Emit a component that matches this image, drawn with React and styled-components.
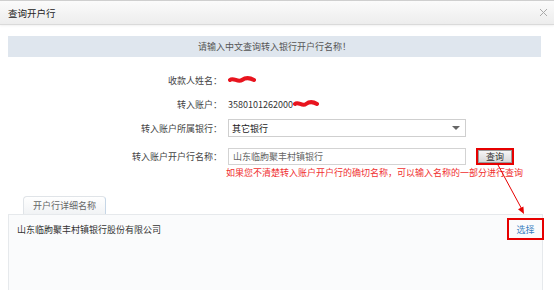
import React from 'react'
import styled, { createGlobalStyle } from 'styled-components'

const GlobalStyle = createGlobalStyle`
  body {
    margin: 0;
    background: #fff;
    font-family: "Noto Sans CJK SC", "Liberation Sans", sans-serif;
  }
`

const Dialog = styled.div`
  position: relative;
  width: 554px;
  height: 290px;
  overflow: hidden;
  background: #fff;
  border-top: 1px solid #cfcfcf;
  box-sizing: border-box;
`

const Header = styled.div`
  height: 23px;
  display: flex;
  align-items: center;
  justify-content: space-between;
  padding: 0 6px 0 8px;
  background: linear-gradient(#fbfbfb, #ededed);
  border-bottom: 1px solid #dadada;
  box-shadow: 0 1px 2px rgba(0, 0, 0, 0.06);
`

const Title = styled.div`
  font-size: 9.5px;
  color: #222;
`

const Body = styled.div`
  padding: 11px 13px 0 8px;
`

const Banner = styled.div`
  height: 21px;
  display: flex;
  align-items: center;
  justify-content: center;
  background: #dfe6ee;
  color: #555;
  font-size: 9px;
`

const Row = styled.div`
  display: grid;
  grid-template-columns: 214px 1fr;
  column-gap: 6px;
  align-items: center;
  height: ${({ $h }) => $h}px;
  margin-top: ${({ $mt }) => $mt}px;
`

const Label = styled.div`
  text-align: right;
  color: #444;
  font-size: 9px;
`

const Value = styled.div`
  display: flex;
  align-items: center;
  color: #333;
  font-size: 9px;
`

const Select = styled.div`
  width: 238px;
  height: 18px;
  box-sizing: border-box;
  border: 1px solid #cfcfcf;
  display: flex;
  align-items: center;
  justify-content: space-between;
  padding: 0 5px 0 3px;
  color: #222;
  font-size: 9px;
`

const Caret = styled.span`
  width: 0;
  height: 0;
  border-left: 4px solid transparent;
  border-right: 4px solid transparent;
  border-top: 4px solid #666;
`

const Input = styled.div`
  width: 238px;
  height: 17px;
  box-sizing: border-box;
  border: 1px solid #d3d3d3;
  display: flex;
  align-items: center;
  padding: 0 4px;
  color: #666;
  font-size: 9px;
`

const Highlight = styled.div`
  box-sizing: border-box;
  border: 2px solid #e60000;
  width: ${({ $w }) => $w}px;
  height: ${({ $h }) => $h}px;
  margin-left: ${({ $ml }) => $ml || 0}px;
  display: flex;
  align-items: center;
  justify-content: center;
`

const Button = styled.div`
  width: 100%;
  height: 100%;
  box-sizing: border-box;
  border: 1px solid #9a9a9a;
  background: linear-gradient(#f6f6f6, #d9d9d9);
  display: flex;
  align-items: center;
  justify-content: center;
  color: #333;
  font-size: 9px;
`

const Hint = styled.div`
  margin-left: -2px;
  color: #f03030;
  font-size: 9px;
  white-space: nowrap;
`

const TabBar = styled.div`
  display: flex;
  align-items: flex-end;
  height: 18px;
  margin-top: 17px;
  padding-left: 15px;
`

const Tab = styled.div`
  width: 83px;
  height: 18px;
  box-sizing: border-box;
  border: 1px solid #e0e4e8;
  border-right-color: #c6d6e6;
  border-bottom: none;
  border-radius: 4px 4px 0 0;
  background: linear-gradient(#ffffff, #f1f3f5);
  display: flex;
  align-items: center;
  justify-content: center;
  color: #666;
  font-size: 9px;
`

const Panel = styled.div`
  width: 535px;
  height: 80px;
  box-sizing: border-box;
  background: #fafbfc;
  border: 1px solid #e6e9ec;
  border-bottom: none;
  padding-top: 3px;
`

const ResultRow = styled.div`
  display: flex;
  align-items: center;
  justify-content: space-between;
  height: 22px;
  padding-left: 8px;
  margin-right: -2px;
  color: #333;
  font-size: 9px;
`

const PickLink = styled.span`
  color: #3a7fc0;
  font-size: 9px;
`

const Overlay = styled.svg`
  position: absolute;
  left: 0;
  top: 0;
  pointer-events: none;
`

const Scribble = ({ w }) => (
  <svg width={w} height="8" viewBox={`0 0 ${w} 8`}>
    <path
      d={`M2 4 C${w * 0.2} 1, ${w * 0.35} 7, ${w * 0.5} 4 S${w * 0.8} 2, ${w - 2} 4`}
      stroke="#e8141e"
      strokeWidth="4"
      fill="none"
      strokeLinecap="round"
    />
  </svg>
)

export default function App() {
  return (
    <>
      <GlobalStyle />
      <Dialog>
        <Header>
          <Title>查询开户行</Title>
          <svg width="9" height="9" viewBox="0 0 9 9">
            <path d="M1 1 L8 8 M8 1 L1 8" stroke="#aaa" strokeWidth="1" />
          </svg>
        </Header>
        <Body>
          <Banner>请输入中文查询转入银行开户行名称！</Banner>
          <Row $h={22} $mt={12}>
            <Label>收款人姓名：</Label>
            <Value>
              <Scribble w={28} />
            </Value>
          </Row>
          <Row $h={22} $mt={2}>
            <Label>转入账户：</Label>
            <Value>
              3580101262000
              <Scribble w={26} />
            </Value>
          </Row>
          <Row $h={22} $mt={2}>
            <Label>转入账户所属银行：</Label>
            <Value>
              <Select>
                其它银行
                <Caret />
              </Select>
            </Value>
          </Row>
          <Row $h={22} $mt={6}>
            <Label>转入账户开户行名称：</Label>
            <Value>
              <Input>山东临朐聚丰村镇银行</Input>
              <Highlight $w={38} $h={17} $ml={10}>
                <Button>查询</Button>
              </Highlight>
            </Value>
          </Row>
          <Row $h={14} $mt={-2}>
            <span />
            <Hint>如果您不清楚转入账户开户行的确切名称，可以输入名称的一部分进行查询</Hint>
          </Row>
          <TabBar>
            <Tab>开户行详细名称</Tab>
          </TabBar>
          <Panel>
            <ResultRow>
              山东临朐聚丰村镇银行股份有限公司
              <Highlight $w={37} $h={22}>
                <PickLink>选择</PickLink>
              </Highlight>
            </ResultRow>
          </Panel>
        </Body>
        <Overlay width="554" height="290">
          <line x1="498" y1="164" x2="521.5" y2="207.5" stroke="#e60000" strokeWidth="1" />
          <polygon points="524,213 523.4,205.4 518,208.2" fill="#e60000" />
        </Overlay>
      </Dialog>
    </>
  )
}
